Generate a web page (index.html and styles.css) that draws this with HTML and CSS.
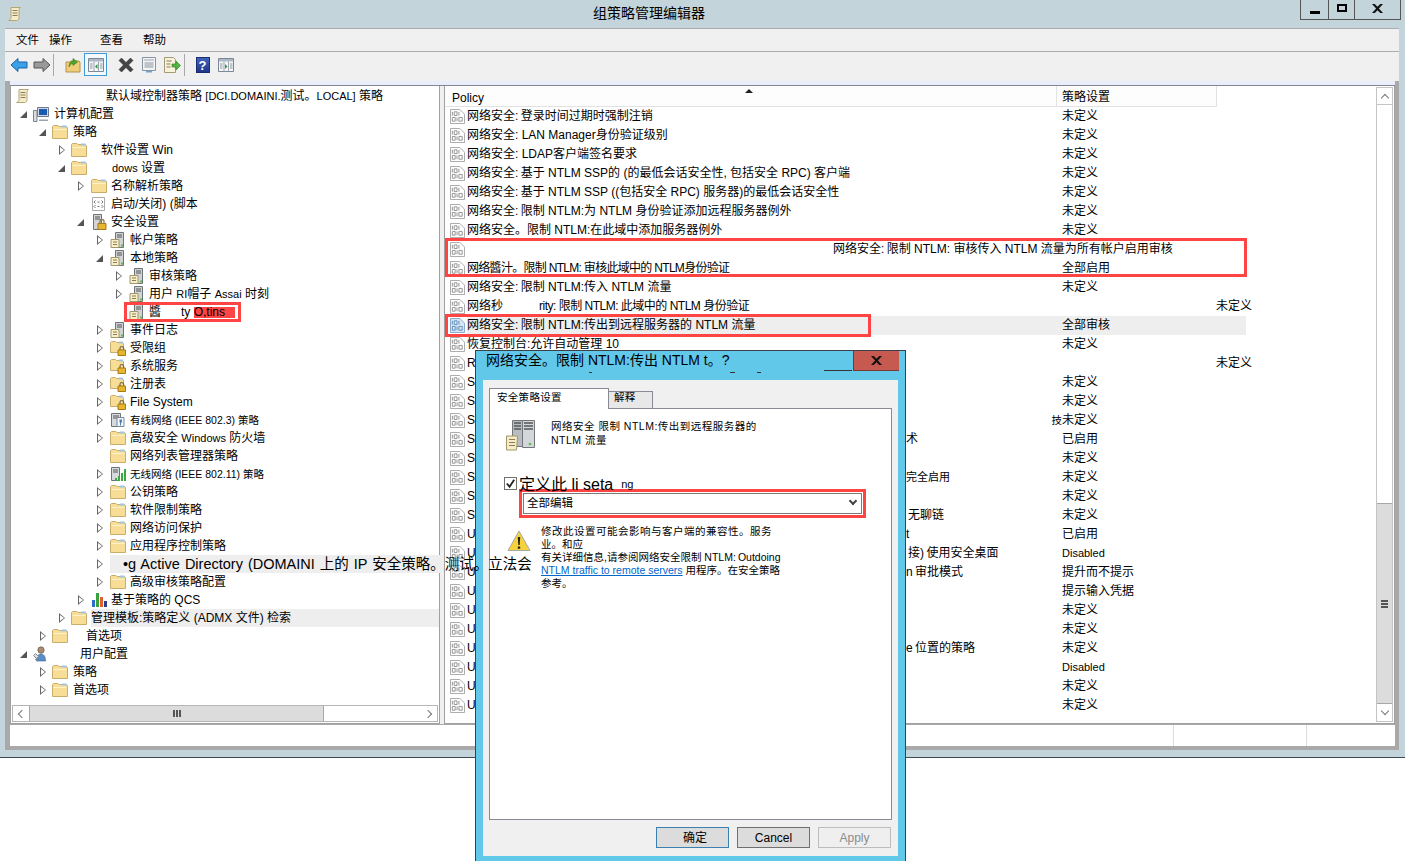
FILE: index.html
```html
<!DOCTYPE html>
<html lang="zh">
<head>
<meta charset="utf-8">
<title>组策略管理编辑器</title>
<link rel="stylesheet" href="styles.css">
</head>
<body>
<svg class="sprite" aria-hidden="true">
  <symbol id="folder" viewBox="0 0 16 16"><path d="M.5 14.500V2.500l1-1h4.500l1 1h7l1.500 1v11z" fill="#f7dd96" stroke="#c9ad6c"/><path d="M1.500 5.500h13" stroke="#fdf2c8"/><path d="M10 1.500h4.500v2H10z" fill="#9cc4e8"/></symbol>
  <symbol id="scroll" viewBox="0 0 16 16"><path d="M4 1.500h9.500c-1.500 1-1.500 2-1.500 3v7c0 2-1 3-2.500 3h-8c1.500-.5 2.500-1.500 2.500-3z" fill="#f6eccb" stroke="#b5a577"/><path d="M5.500 4.500h5M5.500 7h5M5.500 9.500h5" stroke="#8a7c55"/></symbol>
  <symbol id="script" viewBox="0 0 16 16"><path d="M1.500 1.500h12v13h-12z" fill="#fff" stroke="#aaa"/><path d="M4.500 4.500l-1.500 1.500 1.500 1.500M10.500 4.500l1.500 1.500-1.500 1.500M4.500 9l-1.500 1.500L4.500 12M10.500 9l1.500 1.500-1.500 1.500M6.500 6h2M6.500 10.500h2" stroke="#777" fill="none"/></symbol>
  <symbol id="srv" viewBox="0 0 16 16"><path d="M5.500 .5h8v15h-8z" fill="#cfd3d6" stroke="#6d7478"/><path d="M7 3h5M7 5h5" stroke="#555"/><path d="M1 7.500h8v8H1z" fill="#f8eec8" stroke="#a2976c"/><path d="M3 10h4M3 12.500h4" stroke="#8a7c55"/><path d="M11 12.500h2v2h-2z" fill="#5cc04a"/></symbol>
  <symbol id="lockserver" viewBox="0 0 16 16"><path d="M2.500 .5h8v15h-8z" fill="#d2d6d9" stroke="#6d7478"/><path d="M4 3h5M4 5h5" stroke="#555"/><path d="M7 9.500h8v6H7z" fill="#e8b62e" stroke="#a67a14"/><path d="M9 9.500V7.500a2 2 0 0 1 4 0v2" fill="none" stroke="#8a7c55" stroke-width="1.300"/></symbol>
  <symbol id="lockfolder" viewBox="0 0 16 16"><path d="M.5 12.500V2.500l1-1h4l1 1h6l1 1v9z" fill="#f7dd96" stroke="#c9ad6c"/><path d="M9 1.500h4v2H9z" fill="#9cc4e8"/><path d="M8 10h7.500v5.500H8z" fill="#e8b62e" stroke="#a67a14"/><path d="M10 10V8.300a1.800 1.800 0 0 1 3.600 0V10" fill="none" stroke="#7a6a40" stroke-width="1.200"/></symbol>
  <symbol id="computer" viewBox="0 0 16 16"><path d="M4.500 1.500h11v9h-11z" fill="#cfd8e2" stroke="#6b7a8a"/><path d="M6 3h8v6H6z" fill="#1c5cb0"/><path d="M6 13.500h9v1.500H6z" fill="#9aa4ae"/><path d="M.5 4.500h3.500v11H.5z" fill="#d8dde2" stroke="#7a8590"/></symbol>
  <symbol id="user" viewBox="0 0 16 16"><circle cx="8" cy="4" r="3.200" fill="#a78d74" stroke="#5f4a3a" stroke-width=".6"/><path d="M3.500 15c0-5 2-7 4.500-7s4.500 2 4.500 7z" fill="#5c8ec6" stroke="#3a638f" stroke-width=".6"/><path d="M.5 9.500l3 3 2-2-3-3zM2 13l3 2" stroke="#7a8590" fill="#dfe3e6"/></symbol>
  <symbol id="chart" viewBox="0 0 16 16"><path d="M1 8h3v7H1z" fill="#2b6fc4"/><path d="M5 1h3v14H5z" fill="#3ba03e"/><path d="M9 5h3v10H9z" fill="#e2602e"/><path d="M13 9h3v6h-3z" fill="#333c8c"/></symbol>
  <symbol id="wired" viewBox="0 0 16 16"><path d="M1.500 1.500h9v13h-9z" fill="#d6dadd" stroke="#6d7478"/><path d="M3 4h6M3 6h6" stroke="#555"/><path d="M7 5.500h7v9H7z" fill="#f4f7fa" stroke="#7b8a96"/><path d="M9.500 7.500h2.500v3h-1v3h-1v-3h-.5z" fill="#4a7fb5"/></symbol>
  <symbol id="wireless" viewBox="0 0 16 16"><path d="M1.500 1.500h8v13h-8z" fill="#d6dadd" stroke="#6d7478"/><path d="M3 4h5M3 6h5" stroke="#555"/><path d="M5 15h2v-3H5zM8 15h2v-5H8zM11 15h2V7h-2zM14 15h2V3h-2z" fill="#3da83e"/></symbol>
  <symbol id="pol" viewBox="0 0 16 16"><path d="M.5 .5h10l5 5v10H.5z" fill="#fff" stroke="#a5a5a5"/><path d="M2.500 3v4M4.500 3h3v4h-3zM9.500 3v4M2.500 9h3v4h-3zM7.500 9v4M9.500 9h3.500v4H9.500z" fill="none" stroke="#8f8f8f"/></symbol>
  <symbol id="polsel" viewBox="0 0 16 16"><path d="M.5 .5h10l5 5v10H.5z" fill="#d6e6f7" stroke="#7ea6cf"/><path d="M2.500 3v4M4.500 3h3v4h-3zM9.500 3v4M2.500 9h3v4h-3zM7.500 9v4M9.500 9h3.500v4H9.500z" fill="none" stroke="#5f8cb8"/></symbol>
  <symbol id="back" viewBox="0 0 18 16"><path d="M1 8l7-6.500V5h9v6H8v3.500z" fill="#3aa0e8" stroke="#1b62a8"/></symbol>
  <symbol id="fwd" viewBox="0 0 18 16"><path d="M17 8l-7-6.500V5H1v6h9v3.500z" fill="#9a9a9a" stroke="#555"/></symbol>
  <symbol id="up" viewBox="0 0 16 16"><path d="M1 15V5h4l1-1h8l1 1v10z" fill="#f0cd78" stroke="#b3924a"/><path d="M4 10c0-4 2-6 4-6V1.500L12.500 5 8 8.500V6.500C6 6.500 5 8 4 10z" fill="#4da52f" stroke="#2f7a1a" stroke-width=".6"/></symbol>
  <symbol id="pane" viewBox="0 0 16 14"><path d="M.5 .5h15v13H.5z" fill="#f4f6f8" stroke="#7b8794"/><path d="M1 1h14v2.500H1z" fill="#aeb8c2"/><path d="M6 3.500v10M10.500 3.500v10" stroke="#9aa4ae"/><path d="M2 6h2.500M2 8h2.500M2 10h2.500M12 6h2.500M12 8h2.500M12 10h2.500" stroke="#8a949e"/><path d="M9.500 6v5L7 8.500z" fill="#2c9e3c"/></symbol>
  <symbol id="pane2" viewBox="0 0 16 14"><path d="M.5 .5h15v13H.5z" fill="#f4f6f8" stroke="#7b8794"/><path d="M1 1h14v2.500H1z" fill="#aeb8c2"/><path d="M6 3.500v10M10.500 3.500v10" stroke="#9aa4ae"/><path d="M2 6h2.500M2 8h2.500M2 10h2.500M12 6h2.500M12 8h2.500M12 10h2.500" stroke="#8a949e"/><path d="M7 6v5l2.500-2.500z" fill="#2c9e3c"/></symbol>
  <symbol id="del" viewBox="0 0 16 16"><path d="M1 3.500L3.500 1 8 5.500 12.500 1 15 3.500 10.500 8 15 12.500 12.500 15 8 10.500 3.500 15 1 12.500 5.500 8z" fill="#444" stroke="#222" stroke-width=".5"/></symbol>
  <symbol id="props" viewBox="0 0 16 16"><path d="M1.500 .5h13v13h-13z" fill="#f2f4f6" stroke="#8a949e"/><path d="M3 2h10v2H3z" fill="#c5ced8"/><path d="M3.500 6h9M3.500 8h9M3.500 10h9" stroke="#8a949e"/><path d="M5 14h6v1.500H5z" fill="#6fa3d0"/></symbol>
  <symbol id="export" viewBox="0 0 18 16"><path d="M1.500 .5h9l2 2v13h-11z" fill="#f8f2dc" stroke="#a59a76"/><path d="M3.500 4h5M3.500 7h4M3.500 10h4" stroke="#8a7c55"/><path d="M9 7h4V4l4.500 4.500L13 13v-3H9z" fill="#55b545" stroke="#2f7a1a" stroke-width=".6"/></symbol>
  <symbol id="warn" viewBox="0 0 24 22"><path d="M12 1L23 20.500H1z" fill="#f5d23a" stroke="#a7a7a7"/><path d="M10.800 7h2.400l-.5 8h-1.400zM10.800 16.500h2.400v2.300h-2.400z" fill="#222"/></symbol>
  <symbol id="bigsrv" viewBox="0 0 32 33"><path d="M7.500 1.500h10v26h-10z" fill="#b9bdc0" stroke="#70767a"/><path d="M17.500 1.500h12v27h-12z" fill="#d4d7d9" stroke="#70767a"/><path d="M9 4h7M9 7h7M9 10h7M19 4h9M19 7h9M19 10h9" stroke="#555" stroke-width="1.500"/><path d="M1.500 17h11l-1 14h-10z" fill="#f6edc8" stroke="#a2976c"/><path d="M4 20.500h6M4 23.500h6M4 26.500h6" stroke="#8a7c55"/><circle cx="25" cy="25" r="1.300" fill="#5cc04a"/></symbol>
</svg>

<div class="app">
  <header class="titlebar">
    <svg class="ico-title"><use href="#scroll"/></svg>
    <div class="apptitle">组策略管理编辑器</div>
    <div class="winbtns">
      <div class="wb wb-min"><i class="glyph-min"></i></div>
      <div class="wb wb-max"><i class="glyph-max"></i></div>
      <div class="wb wb-close"><svg class="xicon" viewBox="0 0 14 12"><path d="M1 1h3l3 3 3-3h3L8.500 6 13 11h-3L7 8l-3 3H1l4.500-5z" fill="#111"/></svg></div>
    </div>
  </header>

  <div class="frame">
    <nav class="menubar">
      <span class="m1">文件</span><span class="m2">操作</span><span class="m3">查看</span><span class="m4">帮助</span>
    </nav>
    <div class="toolbar">
      <div class="tb"><svg class="t18"><use href="#back"/></svg></div>
      <div class="tb"><svg class="t18"><use href="#fwd"/></svg></div>
      <div class="tsep"></div>
      <div class="tb tb-g"><svg class="t16"><use href="#up"/></svg></div>
      <div class="tb tb-on"><svg class="t16"><use href="#pane"/></svg></div>
      <div class="tb tb-g2"><svg class="t16"><use href="#del"/></svg></div>
      <div class="tb"><svg class="t16"><use href="#props"/></svg></div>
      <div class="tb"><svg class="t18"><use href="#export"/></svg></div>
      <div class="tsep tsep2"></div>
      <div class="tb tb-g3"><div class="help">?</div></div>
      <div class="tb"><svg class="t16"><use href="#pane2"/></svg></div>
    </div>

    <div class="work">
      <div class="strip"></div>
      <div class="panes">
        <section class="left">
          <div class="tree">
            <div class="tr l0"><svg class="ic"><use href="#scroll"/></svg><span class="t t-root">默认域控制器策略 <span class="la">[DCI.DOMAINI.</span>测试。<span class="la">LOCAL]</span> 策略</span></div>
            <div class="tr l1"><i class="ex open"></i><svg class="ic"><use href="#computer"/></svg><span class="t">计算机配置</span></div>
            <div class="tr l2"><i class="ex open"></i><svg class="ic"><use href="#folder"/></svg><span class="t">策略</span></div>
            <div class="tr l3"><i class="ex"></i><svg class="ic"><use href="#folder"/></svg><span class="t t-sw">软件设置 Win</span></div>
            <div class="tr l3"><i class="ex open"></i><svg class="ic"><use href="#folder"/></svg><span class="t t-dw"><span class="la">dows</span> 设置</span></div>
            <div class="tr l4"><i class="ex"></i><svg class="ic"><use href="#folder"/></svg><span class="t">名称解析策略</span></div>
            <div class="tr l4"><i class="ex none"></i><svg class="ic"><use href="#script"/></svg><span class="t">启动/关闭) (脚本</span></div>
            <div class="tr l4"><i class="ex open"></i><svg class="ic"><use href="#lockserver"/></svg><span class="t">安全设置</span></div>
            <div class="tr l5"><i class="ex"></i><svg class="ic"><use href="#srv"/></svg><span class="t">帐户策略</span></div>
            <div class="tr l5"><i class="ex open"></i><svg class="ic"><use href="#srv"/></svg><span class="t">本地策略</span></div>
            <div class="tr l6"><i class="ex"></i><svg class="ic"><use href="#srv"/></svg><span class="t">审核策略</span></div>
            <div class="tr l6"><i class="ex"></i><svg class="ic"><use href="#srv"/></svg><span class="t">用户 <span class="la">RI</span>帽子 <span class="la">Assai</span> 时刻</span></div>
            <div class="tr l6"><i class="ex none"></i><svg class="ic"><use href="#srv"/></svg><span class="t">醬<span class="gap-ty">ty</span> <span class="redfill">O,tins</span></span></div>
            <div class="tr l5"><i class="ex"></i><svg class="ic"><use href="#srv"/></svg><span class="t">事件日志</span></div>
            <div class="tr l5"><i class="ex"></i><svg class="ic"><use href="#lockfolder"/></svg><span class="t">受限组</span></div>
            <div class="tr l5"><i class="ex"></i><svg class="ic"><use href="#lockfolder"/></svg><span class="t">系统服务</span></div>
            <div class="tr l5"><i class="ex"></i><svg class="ic"><use href="#lockfolder"/></svg><span class="t">注册表</span></div>
            <div class="tr l5"><i class="ex"></i><svg class="ic"><use href="#lockfolder"/></svg><span class="t">File System</span></div>
            <div class="tr l5"><i class="ex"></i><svg class="ic"><use href="#wired"/></svg><span class="t t-sm">有线网络 (IEEE 802.3) 策略</span></div>
            <div class="tr l5"><i class="ex"></i><svg class="ic"><use href="#folder"/></svg><span class="t">高级安全 <span class="la">Windows</span> 防火墙</span></div>
            <div class="tr l5"><i class="ex none"></i><svg class="ic"><use href="#folder"/></svg><span class="t">网络列表管理器策略</span></div>
            <div class="tr l5"><i class="ex"></i><svg class="ic"><use href="#wireless"/></svg><span class="t t-sm">无线网络 (IEEE 802.11) 策略</span></div>
            <div class="tr l5"><i class="ex"></i><svg class="ic"><use href="#folder"/></svg><span class="t">公钥策略</span></div>
            <div class="tr l5"><i class="ex"></i><svg class="ic"><use href="#folder"/></svg><span class="t">软件限制策略</span></div>
            <div class="tr l5"><i class="ex"></i><svg class="ic"><use href="#folder"/></svg><span class="t">网络访问保护</span></div>
            <div class="tr l5"><i class="ex"></i><svg class="ic"><use href="#folder"/></svg><span class="t">应用程序控制策略</span></div>
            <div class="tr l5"><i class="ex"></i><div class="greybar"><span class="t-ad">•g Active Directory (DOMAINI 上的 IP 安全策略。测试。立法会</span></div></div>
            <div class="tr l5"><i class="ex"></i><svg class="ic"><use href="#folder"/></svg><span class="t">高级审核策略配置</span></div>
            <div class="tr l4"><i class="ex"></i><svg class="ic"><use href="#chart"/></svg><span class="t">基于策略的 QCS</span></div>
            <div class="tr l3"><i class="ex"></i><svg class="ic"><use href="#folder"/></svg><div class="greybar gb-ad2"><span>管理模板:策略定义 (ADMX 文件) 检索</span></div></div>
            <div class="tr l2"><i class="ex"></i><svg class="ic"><use href="#folder"/></svg><span class="t t-pref">首选项</span></div>
            <div class="tr l1"><i class="ex open"></i><svg class="ic"><use href="#user"/></svg><span class="t t-user">用户配置</span></div>
            <div class="tr l2"><i class="ex"></i><svg class="ic"><use href="#folder"/></svg><span class="t">策略</span></div>
            <div class="tr l2"><i class="ex"></i><svg class="ic"><use href="#folder"/></svg><span class="t">首选项</span></div>
          </div>
          <div class="hscroll">
            <div class="sb-btn"><i class="chev chev-l"></i></div>
            <div class="h-thumb"><i class="grip-v"></i></div>
            <div class="h-track"></div>
            <div class="sb-btn"><i class="chev chev-r"></i></div>
          </div>
        </section>

        <div class="splitter"></div>

        <section class="right">
          <div class="listwrap">
            <div class="lhead">
              <div class="lh-a">Policy<i class="sortarrow"></i></div>
              <div class="lh-b">策略设置</div>
            </div>
            <div class="lr"><svg class="lic"><use href="#pol"/></svg><span class="nm">网络安全:&thinsp;登录时间过期时强制注销</span><span class="tl"></span><span class="val">未定义</span></div>
            <div class="lr"><svg class="lic"><use href="#pol"/></svg><span class="nm">网络安全: LAN Manager身份验证级别</span><span class="tl"></span><span class="val">未定义</span></div>
            <div class="lr"><svg class="lic"><use href="#pol"/></svg><span class="nm">网络安全: LDAP客户端签名要求</span><span class="tl"></span><span class="val">未定义</span></div>
            <div class="lr"><svg class="lic"><use href="#pol"/></svg><span class="nm">网络安全:&thinsp;基于 NTLM SSP的 (的最低会话安全性, 包括安全 RPC) 客户端</span><span class="tl"></span><span class="val">未定义</span></div>
            <div class="lr"><svg class="lic"><use href="#pol"/></svg><span class="nm">网络安全:&thinsp;基于 NTLM SSP ((包括安全 RPC) 服务器)的最低会话安全性</span><span class="tl"></span><span class="val">未定义</span></div>
            <div class="lr"><svg class="lic"><use href="#pol"/></svg><span class="nm">网络安全:&thinsp;限制 NTLM:为 NTLM 身份验证添加远程服务器例外</span><span class="tl"></span><span class="val">未定义</span></div>
            <div class="lr"><svg class="lic"><use href="#pol"/></svg><span class="nm">网络安全。限制 NTLM:在此域中添加服务器例外</span><span class="tl"></span><span class="val">未定义</span></div>
            <div class="lr"><svg class="lic"><use href="#pol"/></svg><span class="nm nm-far">网络安全:&thinsp;限制 NTLM: 审核传入 NTLM 流量为所有帐户启用审核</span><span class="val"></span></div>
            <div class="lr"><svg class="lic"><use href="#pol"/></svg><span class="nm sq1">网络醬汁。限制 NTLM: 审核此域中的 NTLM身份验证</span><span class="tl"></span><span class="val">全部启用</span></div>
            <div class="lr"><svg class="lic"><use href="#pol"/></svg><span class="nm">网络安全:&thinsp;限制 NTLM:传入 NTLM 流量</span><span class="tl"></span><span class="val">未定义</span></div>
            <div class="lr"><svg class="lic"><use href="#pol"/></svg><span class="nm">网络秒<span class="gap-rity sq2">rity: 限制 NTLM: 此域中的 NTLM 身份验证</span></span><span class="tl"></span><span class="val val-far">未定义</span></div>
            <div class="lr sel"><svg class="lic"><use href="#polsel"/></svg><span class="nm">网络安全:&thinsp;限制 NTLM:传出到远程服务器的 NTLM 流量</span><span class="tl"></span><span class="val">全部审核</span></div>
            <div class="lr"><svg class="lic"><use href="#pol"/></svg><span class="nm">恢复控制台:允许自动管理 10</span><span class="tl"></span><span class="val">未定义</span></div>
            <div class="lr"><svg class="lic"><use href="#pol"/></svg><span class="nm">R</span><span class="tl"></span><span class="val val-far">未定义</span></div>
            <div class="lr"><svg class="lic"><use href="#pol"/></svg><span class="nm">S</span><span class="tl"></span><span class="val">未定义</span></div>
            <div class="lr"><svg class="lic"><use href="#pol"/></svg><span class="nm">S</span><span class="tl"></span><span class="val">未定义</span></div>
            <div class="lr"><svg class="lic"><use href="#pol"/></svg><span class="nm">Sy</span><span class="tl tl-end">技</span><span class="val">未定义</span></div>
            <div class="lr"><svg class="lic"><use href="#pol"/></svg><span class="nm">Sy</span><span class="tl">术</span><span class="val">已启用</span></div>
            <div class="lr"><svg class="lic"><use href="#pol"/></svg><span class="nm">Sy</span><span class="tl"></span><span class="val">未定义</span></div>
            <div class="lr"><svg class="lic"><use href="#pol"/></svg><span class="nm">Sy</span><span class="tl tl-sm">完全启用</span><span class="val">未定义</span></div>
            <div class="lr"><svg class="lic"><use href="#pol"/></svg><span class="nm">Sy</span><span class="tl"></span><span class="val">未定义</span></div>
            <div class="lr"><svg class="lic"><use href="#pol"/></svg><span class="nm">Sy</span><span class="tl tl-in">无聊链</span><span class="val">未定义</span></div>
            <div class="lr"><svg class="lic"><use href="#pol"/></svg><span class="nm">U</span><span class="tl">t</span><span class="val">已启用</span></div>
            <div class="lr"><svg class="lic"><use href="#pol"/></svg><span class="nm">U</span><span class="tl tl-in">接)&thinsp;使用安全桌面</span><span class="val val-en">Disabled</span></div>
            <div class="lr"><svg class="lic"><use href="#pol"/></svg><span class="nm">U</span><span class="tl">n&thinsp;审批模式</span><span class="val">提升而不提示</span></div>
            <div class="lr"><svg class="lic"><use href="#pol"/></svg><span class="nm">U</span><span class="tl"></span><span class="val">提示输入凭据</span></div>
            <div class="lr"><svg class="lic"><use href="#pol"/></svg><span class="nm">U</span><span class="tl"></span><span class="val">未定义</span></div>
            <div class="lr"><svg class="lic"><use href="#pol"/></svg><span class="nm">U</span><span class="tl"></span><span class="val">未定义</span></div>
            <div class="lr"><svg class="lic"><use href="#pol"/></svg><span class="nm">U</span><span class="tl">e&thinsp;位置的策略</span><span class="val">未定义</span></div>
            <div class="lr"><svg class="lic"><use href="#pol"/></svg><span class="nm">U</span><span class="tl"></span><span class="val val-en">Disabled</span></div>
            <div class="lr"><svg class="lic"><use href="#pol"/></svg><span class="nm">U</span><span class="tl"></span><span class="val">未定义</span></div>
            <div class="lr"><svg class="lic"><use href="#pol"/></svg><span class="nm">U</span><span class="tl"></span><span class="val">未定义</span></div>
          </div>
          <div class="vscroll">
            <div class="sb-btn"><i class="chev chev-u"></i></div>
            <div class="v-track"></div>
            <div class="v-thumb"><i class="grip-h"></i></div>
            <div class="sb-btn"><i class="chev chev-d"></i></div>
          </div>
        </section>
      </div>
      <footer class="status"><div class="s1"></div><div class="s2"></div><div class="s3"></div></footer>
    </div>
  </div>
</div>

<div class="redbox rb-tree"></div>
<div class="redbox rb-two"></div>
<div class="redbox rb-sel"></div>

<div class="dlg">
  <div class="dlg-title">
    <div class="dlg-cap">网络安全。限制 NTLM:传出 NTLM t。?</div>
    <div class="dlg-ticks"></div>
    <div class="dlg-rule"></div>
    <div class="dlg-close"><svg class="xicon" viewBox="0 0 14 12"><path d="M1 1h3l3 3 3-3h3L8.500 6 13 11h-3L7 8l-3 3H1l4.500-5z" fill="#111"/></svg></div>
  </div>
  <div class="dlg-body">
    <div class="tabs">
      <div class="tab tab-on">安全策略设置</div>
      <div class="tab tab-off">解释</div>
    </div>
    <div class="tabpanel">
      <div class="desc">
        <svg class="bigsrv"><use href="#bigsrv"/></svg>
        <div class="desc-t">网络安全 限制 NTLM:传出到远程服务器的<br>NTLM 流量</div>
      </div>
      <div class="chkrow">
        <span class="chk"><svg viewBox="0 0 12 12" class="chkmark"><path d="M2 6l3 3.500L10 2" fill="none" stroke="#222" stroke-width="2"/></svg></span>
        <span class="chk-l">定义此 li seta</span><span class="chk-s">ng</span>
      </div>
      <div class="combo"><span>全部编辑</span><i class="chev chev-d chev-dark"></i></div>
      <div class="warnrow">
        <svg class="warn"><use href="#warn"/></svg>
        <div class="warn-t"><span class="ws">修改此设置可能会影响与客户端的兼容性。服务</span><br>业。和应<br>有关详细信息,请参阅网络安全限制 NTLM:&thinsp;Outdoing<br><a class="lnk">NTLM traffic to remote servers</a> 用程序。在安全策略<br>参考。</div>
      </div>
    </div>
    <div class="dlg-btns">
      <div class="btn btn-def">确定</div>
      <div class="btn btn-can">Cancel</div>
      <div class="btn btn-dis">Apply</div>
    </div>
  </div>
</div>
</body>
</html>
```

FILE: styles.css
```css
* { box-sizing: border-box; }
html, body { margin: 0; height: 100%; overflow: hidden; background: #fff; }
body {
  position: relative;
  font: 12px/18px "Liberation Sans", "Noto Sans CJK SC", sans-serif;
  color: #000;
}
.sprite { position: absolute; width: 0; height: 0; }
svg { display: block; flex: none; }
.la { font-size: 11px; }

.app { height: 758px; background: #c3d4da; border-bottom: 1px solid #3c4a55; }

.titlebar { height: 28px; display: flex; position: relative; }
.ico-title { width: 16px; height: 16px; margin: 6px 0 0 7px; }
.apptitle { position: absolute; left: 593px; top: 4px; font-size: 14px; line-height: 18px; }
.winbtns { margin-left: auto; margin-right: 4px; display: flex; height: 20px; border: solid #555; border-width: 0 1px 1px; }
.wb { display: flex; align-items: center; justify-content: center; border-right: 1px solid #555; }
.wb:last-child { border-right: 0; }
.wb-min { width: 28px; }
.wb-max { width: 26px; }
.wb-close { width: 45px; padding-bottom: 3px; }
.glyph-min { width: 10px; height: 3px; background: #000; margin-top: 5px; }
.glyph-max { width: 10px; height: 8px; border: 2px solid #000; margin-top: -4px; }

.frame { margin: 0 6px 0 5px; }
.menubar { height: 24px; background: #f0f0f0; border-top: 1px solid #a9adb2; border-bottom: 1px solid #a9adb2; position: relative; padding-top: 2px; line-height: 19px; font-size: 11.5px; }
.m1 { margin-left: 11px; }
.m2 { margin-left: 10px; }
.m3 { margin-left: 28px; }
.m4 { margin-left: 20px; }

.toolbar { height: 29px; background: #f0f0f0; display: flex; padding: 1px 0 0 2px; align-items: flex-start; }
.tb { width: 23px; height: 23px; display: flex; align-items: center; justify-content: center; }
.tb-on { border: 1px solid #3f9bd8; background: #f4f9fd; }
.tb-g { margin-left: 7px; }
.tb-g2 { margin-left: 7px; }
.tb-g3 { margin-left: 6px; }
.tsep { width: 1px; height: 22px; margin-top: 1px; background: #a9a9a9; }
.tsep2 { margin-left: 1px; }
.t18 { width: 18px; height: 16px; }
.t16 { width: 16px; height: 16px; }
.help { width: 14px; height: 16px; background: linear-gradient(#3f62bd, #21368a); color: #fff; font: bold 13px/16px "Liberation Sans", sans-serif; text-align: center; border: 1px solid #1c2c72; }

.work { background: #a9a9a9; padding: 0 4px 4px 5px; height: 669px; }
.strip { height: 4px; background: #e8eefc; }
.panes { height: 639px; display: flex; background: #f0f0f0; border-top: 1px solid #85858f; }

.left { width: 430px; background: #fff; border: solid #a0a0a0; border-width: 0 1px 1px; display: flex; flex-direction: column; }
.tree { height: 619px; padding-top: 1px; }
.tr { height: 18px; display: flex; align-items: center; white-space: nowrap; }
.l0 { padding-left: 4px; }
.l1 { padding-left: 7px; }
.l2 { padding-left: 26px; }
.l3 { padding-left: 45px; }
.l4 { padding-left: 65px; }
.l5 { padding-left: 84px; }
.l6 { padding-left: 103px; }
.ex { width: 15px; height: 10px; flex: none; display: block; position: relative; }
.ex::before { content: ""; position: absolute; left: 3px; top: 0; border: solid transparent; border-width: 5px 0 5px 6px; border-left-color: #666; }
.ex::after { content: ""; position: absolute; left: 4px; top: 2px; border: solid transparent; border-width: 3px 0 3px 4px; border-left-color: #fff; }
.ex.open::before { left: 2px; top: 2px; border-width: 0 0 7px 7px; border-color: transparent transparent #555 transparent; }
.ex.open::after { display: none; }
.ex.none::before, .ex.none::after { display: none; }
.l4 .ex::before, .l5 .ex::before, .l6 .ex::before { left: 2px; }
.l4 .ex::after, .l5 .ex::after, .l6 .ex::after { left: 3px; }
.l4 .ex.open::before, .l5 .ex.open::before { left: 1px; }
.ic { width: 16px; height: 16px; }
.t { margin-left: 4px; }
.l1 .t { margin-left: 5px; }
.l2 .t { margin-left: 5px; }
.t-root { margin-left: 75px; }
.t-sw { margin-left: 14px; }
.t-dw { margin-left: 25px; }
.l1 .t-user { margin-left: 31px; }
.l2 .t-pref { margin-left: 18px; }
.t-sm { font-size: 10.5px; }
.gap-ty { margin-left: 20px; }
.redfill { background: #f44; padding-right: 10px; line-height: 11px; display: inline-block; }
.greybar { background: #eee; height: 18px; flex: 1; white-space: nowrap; }
.gb-ad2 { margin-left: 4px; }
.t-ad { position: relative; z-index: 6; font-size: 14.5px; margin-left: 13px; word-spacing: 1px; }

.hscroll { height: 17px; margin: 0 1px; display: flex; border: 1px solid #b5b5b5; }
.sb-btn { width: 16px; height: 15px; display: flex; align-items: center; justify-content: center; flex: none; }
.h-thumb { width: 295px; background: #dcdcdc; border: solid #a8a8a8; border-width: 0 1px; display: flex; align-items: center; justify-content: center; }
.h-track { flex: 1; }
.grip-v { width: 8px; height: 7px; background: repeating-linear-gradient(90deg, #555 0 2px, transparent 2px 3px); }
.grip-h { width: 7px; height: 8px; background: repeating-linear-gradient(180deg, #555 0 2px, transparent 2px 3px); }
.chev { width: 6px; height: 6px; display: block; border: solid #777; border-width: 0 0 1.5px 1.5px; }
.chev-l { transform: rotate(45deg); margin-left: 2px; }
.chev-r { transform: rotate(225deg); margin-right: 2px; }
.chev-u { transform: rotate(135deg); margin-top: 3px; }
.chev-d { transform: rotate(-45deg); margin-top: -3px; }

.splitter { width: 4px; }

.right { flex: 1; background: #fff; border: solid #a0a0a0; border-width: 0 1px 1px; display: flex; position: relative; }
.listwrap { width: 931px; }
.lhead { height: 21px; display: flex; width: 772px; border-bottom: 1px solid #e2e2e2; background: #fdfdfd; }
.lh-a { width: 612px; padding: 4px 0 0 7px; border-right: 1px solid #e2e2e2; position: relative; line-height: 17px; }
.lh-b { flex: 1; padding: 3px 0 0 5px; border-right: 1px solid #e2e2e2; line-height: 17px; }
.sortarrow { position: absolute; left: 300px; top: 3px; border: solid transparent; border-width: 0 4px 4px; border-bottom-color: #222; }

.lr { height: 19px; width: 801px; display: grid; grid-template-columns: 22px 439px 156px 184px; align-items: stretch; line-height: 19px; white-space: nowrap; }
.lic { width: 15px; height: 15px; margin: 2px 0 0 5px; }
.nm, .tl, .val { display: block; }
.nm-far { grid-column: 2 / 4; padding-left: 366px; }
.sq1 { letter-spacing: -.7px; }
.sq2 { letter-spacing: -.5px; }
.tl-end { text-align: right; font-size: 10.5px; }
.tl-in { padding-left: 2px; }
.tl-sm { font-size: 11px; }
.val-far { padding-left: 154px; }
.val-en { font-size: 11px; }
.sel .nm, .sel .tl, .sel .val { background: #eee; }
.gap-rity { margin-left: 36px; }

.vscroll { width: 17px; margin: 1px 0 0 0; border: 1px solid #c4c4c4; display: flex; flex-direction: column; height: 635px; }
.vscroll .sb-btn { width: 15px; height: 16px; }
.v-track { height: 399px; border-top: 1px solid #c4c4c4; }
.v-thumb { height: 201px; background: #dcdcdc; border: solid #a8a8a8; border-width: 1px 0; display: flex; align-items: center; justify-content: center; }

.status { height: 21px; margin-top: 1px; background: #fff; display: flex; }
.s1 { width: 1164px; border-right: 1px solid #ddd; }
.s2 { width: 133px; border-right: 1px solid #ddd; }
.s3 { flex: 1; }

.redbox { position: absolute; border: 3px solid #f44; z-index: 3; pointer-events: none; }
.rb-tree { left: 124px; top: 302px; width: 117px; height: 20px; }
.rb-two { left: 445px; top: 238px; width: 802px; height: 39px; }
.rb-sel { left: 445px; top: 314px; width: 426px; height: 23px; }

.dlg { position: absolute; left: 475px; top: 350px; width: 431px; height: 511px; background: #62c8ea; border: solid #39424a; border-width: 1px 1px 0; z-index: 5; padding: 0 7px 5px; display: flex; flex-direction: column; }
.dlg-title { height: 29px; display: flex; position: relative; flex: none; }
.dlg-cap { font-size: 14px; margin: 0 0 0 3px; line-height: 19px; white-space: nowrap; }
.dlg-ticks { position: absolute; left: 106px; top: 21px; width: 172px; height: 2px; background:
  linear-gradient(#333, #333) 0 0 / 3px 1px no-repeat,
  linear-gradient(#333, #333) 141px 0 / 5px 1px no-repeat,
  linear-gradient(#333, #333) 168px 0 / 4px 1px no-repeat; }
.dlg-rule { position: absolute; right: 46px; top: 19px; width: 28px; height: 1px; background: #333; }
.dlg-close { position: absolute; right: -1px; top: 0; width: 46px; height: 20px; background: #c75a50; border-bottom: 1px solid #7a3a34; border-left: 1px solid #7a3a34; display: flex; align-items: center; justify-content: center; }
.xicon { width: 13px; height: 11px; }

.dlg-body { flex: 1; background: #f0f0f0; padding: 8px 6px 0; display: flex; flex-direction: column; }
.tabs { height: 21px; display: flex; align-items: flex-end; margin-bottom: -1px; position: relative; z-index: 1; flex: none; }
.tab { font-size: 10.5px; letter-spacing: .3px; }
.tab-on { width: 120px; height: 21px; background: #fff; border: solid #8a8a95; border-width: 1px 1px 0; padding: 0 0 0 7px; line-height: 16px; }
.tab-off { width: 44px; height: 18px; background: #e8e8e8; border: solid #8a8a95; border-width: 1px 1px 1px 0; padding-left: 5px; line-height: 11px; }
.tabpanel { height: 412px; background: #fff; border: 1px solid #8a8a95; padding: 10px 16px 0 15px; flex: none; }
.desc { display: flex; gap: 14px; height: 33px; }
.bigsrv { width: 32px; height: 33px; }
.desc-t { font-size: 10.5px; line-height: 14px; letter-spacing: .5px; white-space: nowrap; }
.chkrow { height: 19px; margin-top: 22px; display: flex; align-items: center; white-space: nowrap; margin-left: -1px; }
.chk { width: 13px; height: 13px; border: 1px solid #707070; background: #fff; display: block; }
.chkmark { width: 11px; height: 11px; }
.chk-l { font-size: 16px; margin-left: 2px; line-height: 21px; padding-top: 1px; }
.chk-s { font-size: 11px; margin-left: 8px; }
.combo { margin-left: 18px; width: 339px; height: 21px; border: 1px solid #7a7a7a; box-shadow: 0 0 0 1px #fff, 0 0 0 4px #f44; background: #fff; display: flex; align-items: center; justify-content: space-between; padding: 0 5px 2px 3px; font-size: 11.5px; }
.chev-dark { border-color: #444; border-width: 0 0 2px 2px; }
.warnrow { display: flex; margin: 11px 0 0 2px; gap: 10px; }
.warn { width: 24px; height: 22px; margin-top: 5px; }
.warn-t { font-size: 10.5px; line-height: 13px; white-space: nowrap; }
.ws { letter-spacing: .5px; }
.lnk { color: #0066cc; text-decoration: underline; }
.dlg-btns { display: flex; justify-content: flex-end; gap: 8px; margin: 7px 1px 0 0; }
.btn { width: 73px; height: 21px; background: #dcdcdc; border: 1px solid #707070; text-align: center; line-height: 20px; }
.btn-def { border-color: #3c7fb1; padding-left: 5px; }
.btn-dis { background: #efefef; border-color: #bdbdbd; color: #8c8c8c; }
```
